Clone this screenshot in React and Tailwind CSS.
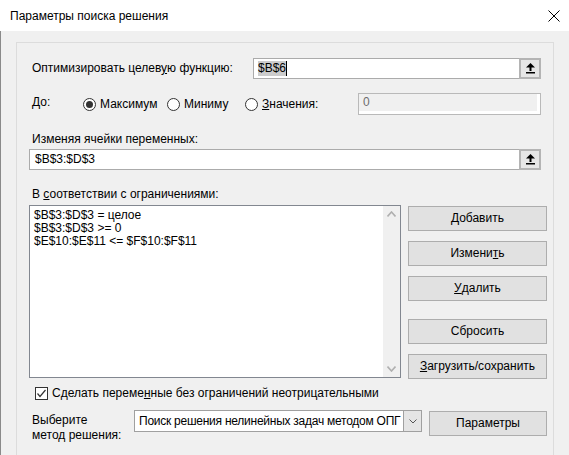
import React from "react";

const F = { fontFamily: '"Liberation Sans", Arial, sans-serif' };

function UpArrow() {
  return (
    <svg width="9" height="11" viewBox="0 0 9 11">
      <polygon points="4.5,0 0,4.5 9,4.5" fill="#000" />
      <rect x="3.5" y="4" width="2" height="4" fill="#000" />
      <rect x="0" y="9" width="9" height="1.5" fill="#000" />
    </svg>
  );
}

function RefButton() {
  return (
    <div className="w-[22px] flex items-center justify-center bg-[#e6e6e6] border-2 border-[#b4b4b4] -my-[1px] -mr-[1px] h-[21px]">
      <UpArrow />
    </div>
  );
}

function Radio({ checked, children }) {
  return (
    <div className="flex items-center gap-[4px]">
      <div className="w-[13px] h-[13px] rounded-full border border-[#333] bg-white flex items-center justify-center">
        {checked && <div className="w-[7px] h-[7px] rounded-full bg-[#333]" />}
      </div>
      <span>{children}</span>
    </div>
  );
}

function Btn({ children, className = "" }) {
  return (
    <div className={"h-[25px] w-[139px] flex items-center justify-center bg-[#e1e1e1] border border-[#adadad] " + className}>
      {children}
    </div>
  );
}

export default function App() {
  return (
    <div className="w-[569px] h-[455px] overflow-hidden bg-[#f0f0f0] text-[12px] leading-[15px] text-black flex flex-col" style={F}>
      {/* Title bar */}
      <div className="h-[31px] bg-white flex items-center justify-between pl-[10px] pr-[9px] shrink-0">
        <span className="text-[12px] mt-[1px]">Параметры поиска решения</span>
        <svg width="12" height="12" viewBox="0 0 12 12">
          <path d="M0.5 0.5 L11.5 11.5 M11.5 0.5 L0.5 11.5" stroke="#000" strokeWidth="1" />
        </svg>
      </div>
      {/* Body */}
      <div className="flex-1 pt-[11px] px-[15px] border-l border-[#8a8a8a]">
        <div className="h-full border border-b-0 border-[#dcdcdc] pl-[12px] pr-[5px] pt-[15px]">
          {/* Row 1 */}
          <div className="flex items-center">
            <div className="w-[224px] pl-[3px]">
              Оптимизировать целев<u>у</u>ю функцию:
            </div>
            <div className="w-[288px] h-[21px] bg-white border border-[#ababab] flex items-center">
              <div className="flex-1 flex items-center pl-[4px]">
                <span className="bg-[#cccccc] leading-[15px]">$B$6</span>
                <span className="w-[1px] h-[15px] bg-black" />
              </div>
              <RefButton />
            </div>
          </div>
          {/* Row 2 */}
          <div className="flex items-center mt-[14px] h-[22px]">
            <div className="w-[54px] pl-[3px] -mt-[3px]">До:</div>
            <div className="w-[84px]"><Radio checked>Максимум</Radio></div>
            <div className="w-[78px]"><Radio>Миниму</Radio></div>
            <div className="w-[113px]"><Radio><u>З</u>начения:</Radio></div>
            <div className="w-[183px] h-[22px] border border-[#b9b9b9] bg-white pr-[3px] pb-[3px]">
              <div className="h-full bg-[#f0f0f0] pl-[4px] text-[#6d6d6d] leading-[16px]">0</div>
            </div>
          </div>
          {/* Row 3 */}
          <div className="mt-[17px] pl-[3px]">Изменяя ячейки переменных:</div>
          <div className="mt-[2px] w-[512px] h-[21px] bg-white border border-[#ababab] flex items-center">
            <div className="flex-1 pl-[5px]">$B$3:$D$3</div>
            <RefButton />
          </div>
          {/* Row 4 */}
          <div className="mt-[17px] pl-[3px]">
            В <u>с</u>оответствии с ограничениями:
          </div>
          <div className="mt-[3px] flex gap-[7px]">
            <div className="w-[372px] h-[173px] bg-white border border-[#828790] flex">
              <div className="flex-1 pl-[4px] pt-[3px] leading-[13px]">
                <div>$B$3:$D$3 = целое</div>
                <div>$B$3:$D$3 &gt;= 0</div>
                <div>$E$10:$E$11 &lt;= $F$10:$F$11</div>
              </div>
              <div className="w-[17px] bg-[#f0f0f0] flex flex-col items-center justify-between py-[5px]">
                <svg width="9" height="6" viewBox="0 0 9 6">
                  <path d="M0.5 5.5 L4.5 1 L8.5 5.5" stroke="#b0b0b0" strokeWidth="1.6" fill="none" />
                </svg>
                <svg width="9" height="6" viewBox="0 0 9 6">
                  <path d="M0.5 0.5 L4.5 5 L8.5 0.5" stroke="#b0b0b0" strokeWidth="1.6" fill="none" />
                </svg>
              </div>
            </div>
            <div className="flex flex-col mt-[1px]">
              <Btn><u>Д</u>обавить</Btn>
              <Btn className="mt-[10px]">Измени<u>т</u>ь</Btn>
              <Btn className="mt-[10px]"><u>У</u>далить</Btn>
              <Btn className="mt-[18px]">Сбросить</Btn>
              <Btn className="mt-[10px]"><u>З</u>агрузить/сохранить</Btn>
            </div>
          </div>
          {/* Checkbox */}
          <div className="mt-[7px] flex items-center pl-[6px] h-[15px]">
            <div className="w-[13px] h-[13px] border border-[#333] bg-white flex items-center justify-center">
              <svg width="11" height="11" viewBox="0 0 11 11">
                <path d="M1.5 5.5 L4 8.5 L9.5 2" stroke="#333" strokeWidth="1.2" fill="none" />
              </svg>
            </div>
            <span className="ml-[4px]">Сделать переме<u>н</u>ные без ограничений неотрицательными</span>
          </div>
          {/* Bottom row */}
          <div className="mt-[9px] flex">
            <div className="w-[105px] pl-[3px] pt-[3px]">
              <div>Выберите</div>
              <div>метод решения:</div>
            </div>
            <div className="w-[288px] h-[22px] bg-white border border-[#a0a0a0] flex">
              <div className="flex-1 pl-[4px] leading-[20px] whitespace-nowrap overflow-hidden tracking-[-0.25px]">
                Поиск решения нелинейных задач методом ОПГ
              </div>
              <div className="w-[18px] bg-[#e5e5e5] border-l border-[#a0a0a0] flex items-center justify-center">
                <svg width="8" height="5" viewBox="0 0 8 5">
                  <path d="M0.5 0.5 L4 4 L7.5 0.5" stroke="#555" strokeWidth="1" fill="none" />
                </svg>
              </div>
            </div>
            <div className="ml-[7px] mt-[1px] w-[118px] h-[25px] flex items-center justify-center bg-[#e1e1e1] border border-[#adadad]">
              Параметры
            </div>
          </div>
        </div>
      </div>
    </div>
  );
}
